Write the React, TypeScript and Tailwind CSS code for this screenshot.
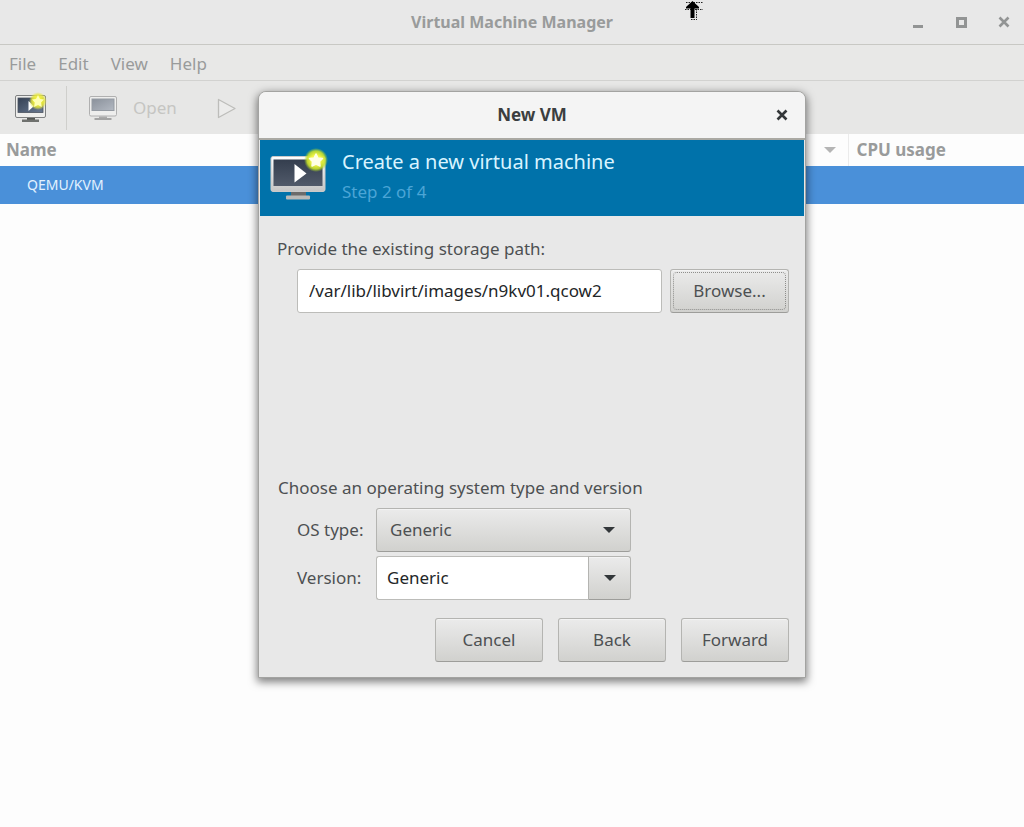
import { useId, useState } from "react";

const raised =
  "border border-[#b4b4b1] border-b-[#9d9d9a] rounded-[3px] bg-linear-to-b from-[#ebebeb] to-[#d1d1ce] shadow-[inset_0_1px_0_#f3f3f3] text-[#4d5052]";

function Caret({ className = "" }: { className?: string }) {
  return (
    <svg width="12" height="6" viewBox="0 0 12 6" className={className} aria-hidden="true">
      <path d="M0 0H12L6 6Z" fill="currentColor" />
    </svg>
  );
}

function CloseGlyph() {
  return (
    <svg width="12" height="12" viewBox="0 0 12 12" aria-hidden="true">
      <path d="M1.5 1.5L10.5 10.5M10.5 1.5L1.5 10.5" stroke="currentColor" strokeWidth="2.6" />
    </svg>
  );
}

function NewMachineIcon() {
  const id = useId();
  return (
    <svg width="32" height="32" viewBox="0 0 32 32" aria-hidden="true">
      <defs>
        <linearGradient id={id + "s"} x1="0" y1="0" x2="1" y2="1">
          <stop offset="0" stopColor="#354154" />
          <stop offset="1" stopColor="#687890" />
        </linearGradient>
        <radialGradient id={id + "g"}>
          <stop offset="0.35" stopColor="#f4f43a" />
          <stop offset="0.7" stopColor="#e6e63c" stopOpacity="0.85" />
          <stop offset="1" stopColor="#e6e650" stopOpacity="0" />
        </radialGradient>
      </defs>
      <rect x="0.5" y="3.5" width="30" height="22" rx="1.5" fill="#eeeeec" stroke="#7f8182" />
      <rect x="3" y="6" width="25" height="14.5" fill={"url(#" + id + "s)"} stroke="#4c5460" strokeWidth="0.8" />
      <path d="M12 26H20V28H12Z" fill="#555753" />
      <path d="M7 27.5H24V30H7Z" fill="#6f716e" />
      <path d="M13.500 9L19 14L13.500 19Z" fill="#fff" />
      <circle cx="23" cy="9" r="9" fill={"url(#" + id + "g)"} />
      <path d="M23 3L25 7L29 7.500L26 10.500L26.800 15L23 13L19 15L19.800 10.500L17 7.500L21 7Z" fill="#ffffb4" />
    </svg>
  );
}

function MonitorIcon() {
  const id = useId();
  return (
    <svg width="30" height="26" viewBox="0 0 30 26" aria-hidden="true">
      <defs>
        <linearGradient id={id} x1="0" y1="0" x2="1" y2="1">
          <stop offset="0" stopColor="#8a919b" />
          <stop offset="1" stopColor="#b3b9c2" />
        </linearGradient>
      </defs>
      <rect x="1.500" y="1.500" width="27" height="19.500" rx="1.500" fill="#eeeeed" stroke="#b0b0b0" />
      <rect x="4" y="4" width="22" height="11.500" fill={"url(#" + id + ")"} stroke="#959ba3" />
      <path d="M11 21.500H19V23H11Z" fill="#aaa" />
      <path d="M6.500 23H23.500V25H6.500Z" fill="#a3a3a3" />
    </svg>
  );
}

function WizardIcon() {
  const id = useId();
  return (
    <svg width="60" height="54" viewBox="0 0 60 54" aria-hidden="true">
      <defs>
        <linearGradient id={id + "s"} x1="0" y1="0" x2="0" y2="1">
          <stop offset="0" stopColor="#343e4e" />
          <stop offset="1" stopColor="#515a6a" />
        </linearGradient>
        <linearGradient id={id + "f"} x1="0" y1="0" x2="0" y2="1">
          <stop offset="0" stopColor="#fff" />
          <stop offset="1" stopColor="#c5c5c5" />
        </linearGradient>
        <radialGradient id={id + "g"}>
          <stop offset="0.4" stopColor="#f4f84a" />
          <stop offset="0.75" stopColor="#c8e02a" stopOpacity="0.9" />
          <stop offset="1" stopColor="#9ad02a" stopOpacity="0" />
        </radialGradient>
      </defs>
      <rect x="1" y="8.500" width="54" height="35" rx="2" fill={"url(#" + id + "f)"} stroke="#c9c9c9" />
      <rect x="3.500" y="11.500" width="49" height="26.500" fill={"url(#" + id + "s)"} />
      <path d="M21 44H36V48H21Z" fill="#6b6b6b" />
      <rect x="16" y="47.500" width="24" height="4" rx="1" fill="#b9b9b7" />
      <path d="M24.500 16V34.500L36.500 25.500Z" fill="#fff" />
      <circle cx="46" cy="12" r="12" fill={"url(#" + id + "g)"} />
      <path
        d="M46 6L48 10L52.500 10.500L49.500 13.500L50 18L46 16L42 18L42.500 13.500L39.500 10.500L44 10Z"
        fill="#ffffe6"
        stroke="#ffffe6"
        strokeWidth="1.500"
        strokeLinejoin="round"
      />
    </svg>
  );
}

function Pointer() {
  return (
    <svg width="22" height="21" viewBox="0 0 22 21" className="absolute left-[682px] top-0" aria-hidden="true">
      <path d="M4 2.500H21M3 9.500H21M14.500 9V18M9 19.500H15" stroke="#222" strokeDasharray="1.500 1" />
      <path d="M10.500 1L17 7V8.500H12.500V18H8.500V8.500H4V7Z" fill="#000" />
    </svg>
  );
}

function ManagerWindow() {
  return (
    <main className="flex min-h-screen flex-col bg-[#fdfdfd] text-[#999b9b]">
      <header className="flex h-[45px] items-center border-b border-[#c8c8c4] bg-[#e8e8e8] px-3.5">
        <div className="flex-1" />
        <h1 className="text-base font-bold">Virtual Machine Manager</h1>
        <div className="flex flex-1 items-center justify-end gap-[31px] text-[#929494]">
          <button aria-label="Minimize" className="flex h-3 w-3 items-end justify-center">
            <span className="h-[3px] w-2.5 bg-current" />
          </button>
          <button aria-label="Maximize" className="flex h-3 w-3 items-center justify-center">
            <span className="h-[11px] w-[11px] border-[3px] border-current" />
          </button>
          <button aria-label="Close window">
            <CloseGlyph />
          </button>
        </div>
      </header>
      <nav className="flex h-9 items-center gap-[22px] border-b border-[#d2d2d0] bg-[#e8e8e7] px-[9px] pt-0.5">
        <button>File</button>
        <button>Edit</button>
        <button>View</button>
        <button>Help</button>
      </nav>
      <div className="flex h-[53px] items-center bg-[#e7e7e6] pl-[15px]">
        <button aria-label="Create a new virtual machine">
          <NewMachineIcon />
        </button>
        <span className="ml-[19px] h-11 w-px bg-[#cfcfcc]" />
        <button className="ml-[21px] flex items-center gap-[15px] text-[#c5c5c2]">
          <MonitorIcon />
          Open
        </button>
        <button aria-label="Run" className="ml-10">
          <svg width="20" height="22" viewBox="0 0 20 22" aria-hidden="true">
            <path d="M1.500 2.500L18 11.500L1.500 20.500Z" fill="#ececeb" stroke="#bdbdba" strokeWidth="1.300" strokeLinejoin="round" />
          </svg>
        </button>
      </div>
      <table className="w-full table-fixed border-collapse text-left">
        <thead>
          <tr className="h-8 bg-[#fdfdfd]">
            <th className="border-r border-[#ebebeb] py-0 pl-1.5 pr-3 font-bold">
              <div className="flex items-center justify-between">
                Name
                <Caret className="text-[#b5b5b5]" />
              </div>
            </th>
            <th className="w-[176px] py-0 pl-2 font-bold">CPU usage</th>
          </tr>
        </thead>
        <tbody>
          <tr className="h-[38px] bg-[#4a90d9] text-sm text-[#e2f2ff]">
            <td className="py-0 pl-[27px]">QEMU/KVM</td>
            <td />
          </tr>
        </tbody>
      </table>
    </main>
  );
}

function NewVmDialog() {
  const [path, setPath] = useState("/var/lib/libvirt/images/n9kv01.qcow2");
  const [version, setVersion] = useState("Generic");
  return (
    <section
      role="dialog"
      aria-labelledby="dialog-title"
      className="absolute left-[258px] top-[91px] w-[548px] overflow-hidden rounded-t-lg border border-[#a3a3a1] bg-[#e8e8e8] text-[#4d5052] shadow-[0_3px_8px_1px_rgba(0,0,0,0.5)]"
    >
      <header className="flex h-12 items-center border-b-2 border-[#aaa9a3] bg-[#f4f4f4] px-[17px]">
        <div className="flex-1" />
        <h2 id="dialog-title" className="font-bold text-[#3b3e40]">
          New VM
        </h2>
        <div className="flex flex-1 justify-end">
          <button aria-label="Close" className="text-[#333638]">
            <CloseGlyph />
          </button>
        </div>
      </header>
      <div className="mx-px flex h-[76px] items-start gap-3 bg-[#0072aa] pl-2.5 pt-2">
        <WizardIcon />
        <div>
          <p className="text-xl leading-7 text-[#d9f4ff]">Create a new virtual machine</p>
          <p className="mt-1 leading-6 text-[#4ba5d6]">Step 2 of 4</p>
        </div>
      </div>
      <form className="pb-[15px] pl-[15px] pr-4 pt-[21px]" onSubmit={(e) => e.preventDefault()}>
        <label htmlFor="path" className="ml-[3px] block leading-6">
          Provide the existing storage path:
        </label>
        <div className="mt-2 flex gap-2 pl-[23px]">
          <input
            id="path"
            value={path}
            onChange={(e) => setPath(e.target.value)}
            className="h-11 min-w-0 flex-1 rounded-[3px] border border-[#bcbcb9] bg-white px-[11px] pb-0.5 text-[#232628] outline-none"
          />
          <button type="button" className={`${raised} h-11 w-[119px] p-0.5`}>
            <span className="flex h-full items-center justify-center rounded-sm border border-dotted border-[#8e8e8c]">
              Browse...
            </span>
          </button>
        </div>
        <p className="ml-1 mt-[163px] leading-6">Choose an operating system type and version</p>
        <div className="mt-2 grid grid-cols-[71px_255px] items-center gap-x-2 gap-y-1 pl-[23px]">
          <label htmlFor="os-type" className="whitespace-nowrap">
            OS type:
          </label>
          <div className="relative">
            <select id="os-type" className={`${raised} h-11 w-full appearance-none px-[13px] outline-none`}>
              <option>Generic</option>
            </select>
            <Caret className="pointer-events-none absolute right-4 top-[19px] text-[#33373a]" />
          </div>
          <label htmlFor="version">Version:</label>
          <div className="flex">
            <input
              id="version"
              value={version}
              onChange={(e) => setVersion(e.target.value)}
              className="h-11 min-w-0 flex-1 rounded-l-[3px] border border-r-0 border-[#bcbcb9] bg-white px-2.5 pb-0.5 text-[#232628] outline-none"
            />
            <button
              type="button"
              aria-label="Show versions"
              className={`${raised} flex h-11 w-[43px] items-center justify-center rounded-l-none`}
            >
              <Caret className="text-[#33373a]" />
            </button>
          </div>
        </div>
        <div className="mt-[18px] flex justify-end gap-[15px]">
          <button type="button" className={`${raised} h-11 w-[108px]`}>
            Cancel
          </button>
          <button type="button" className={`${raised} h-11 w-[108px]`}>
            Back
          </button>
          <button type="submit" className={`${raised} h-11 w-[108px]`}>
            Forward
          </button>
        </div>
      </form>
    </section>
  );
}

export default function App() {
  return (
    <div className="relative font-['Noto_Sans',sans-serif] text-[17px] leading-6">
      <ManagerWindow />
      <NewVmDialog />
      <Pointer />
    </div>
  );
}
